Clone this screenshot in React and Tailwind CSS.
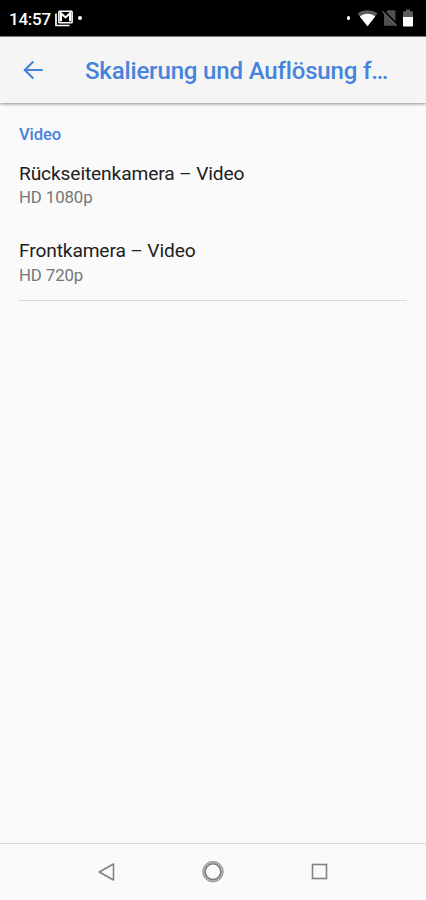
const StatusBar = () => {
  return (
    <div className="flex h-9 items-center justify-between bg-black pl-[9px] pr-[13px] text-white">
      <div className="flex items-center">
        <span className="w-[46px] whitespace-nowrap text-[17px] font-medium leading-9 tracking-[-0.25px] pt-px">14:57</span>
        <svg width="18" height="17" viewBox="0 0 18 17" fill="none">
          <path d="M1 3.5V15.5H14.5" stroke="white" strokeWidth="1.7" />
          <rect x="3.9" y="1.2" width="13.2" height="11.6" rx="0.8" stroke="white" strokeWidth="1.6" />
          <path d="M6 11.3V3.2L10.5 7.4L15 3.2V11.3" stroke="white" strokeWidth="2" />
        </svg>
        <span className="ml-[5px] size-[3.5px] rounded-full bg-white" />
      </div>

      <div className="flex items-center">
        <span className="mr-[7px] size-[3.5px] rounded-full bg-white" />
        <svg className="mr-1" width="21" height="18" viewBox="0 0 21 18">
          <path d="M0.5 4.4C6 0.2 15 0.2 20.5 4.4L10.5 17.2Z" fill="#5c5c5c" />
          <path d="M2.8 7.4C7 4 14 4 18.2 7.4L10.5 17.2Z" fill="white" />
        </svg>
        <svg className="mr-[5px]" width="16" height="18" viewBox="0 0 16 18">
          <path d="M6 1.2H12.2Q13.4 1.2 13.4 2.4V16.8H3.2Q2 16.8 2 15.6V5.2Z" fill="#505050" />
          <path d="M1.4 1.4L15.8 15.8" stroke="black" strokeWidth="1.7" />
          <path d="M0.4 2.4L14.8 16.8" stroke="#5c5c5c" strokeWidth="1.3" />
        </svg>
        <svg width="10" height="18" viewBox="0 0 10 18">
          <path d="M3 0.5H7V2.3H9Q10 2.3 10 3.3V8H0V3.3Q0 2.3 1 2.3H3Z" fill="#5c5c5c" />
          <path d="M0 8H10V16.5Q10 17.5 9 17.5H1Q0 17.5 0 16.5Z" fill="white" />
        </svg>
      </div>
    </div>
  )
}

const Header = () => {
  return (
    <header className="flex h-[67px] items-center border-t border-[#77777a] bg-[#f5f5f5] pl-[23px] text-[#4683dc] shadow-[0_1px_3px_rgba(0,0,0,0.45)]">
      <button className="w-[62px] pb-px" aria-label="Zurück">
        <svg width="21" height="20" viewBox="0 0 21 20" fill="none" stroke="currentColor" strokeWidth="2.1">
          <path d="M19.8 10H2M10.3 1.5L1.8 10L10.3 18.5" />
        </svg>
      </button>
      <h1 className="whitespace-nowrap pt-[2px] text-[24px] font-medium leading-8 tracking-[-0.16px]">Skalierung und Auflösung f…</h1>
    </header>
  )
}

const SettingItem = ({ title, value }) => {
  return (
    <div className="h-[77.25px]">
      <p className="text-[19.2px] leading-[26px] tracking-[-0.14px] text-[#212121]">{title}</p>
      <p className="-mt-[0.7px] text-[16.8px] leading-[22px] tracking-[-0.1px] text-[#757575]">{value}</p>
    </div>
  )
}

const NavigationBar = () => {
  return (
    <nav className="flex h-[57px] items-center justify-between border-t border-[#d8d8d8] px-[98px] pb-px">
      <svg width="17" height="18" viewBox="0 0 17 18" fill="none">
        <path d="M15.5 1V17L1.2 9Z" stroke="#828282" strokeWidth="1.6" strokeLinejoin="round" />
      </svg>
      <svg width="22" height="22" viewBox="0 0 22 22" fill="none">
        <circle cx="11" cy="10.7" r="9.3" stroke="#b4b4b4" strokeWidth="2.6" />
        <circle cx="11" cy="10.7" r="10.2" stroke="#969696" strokeWidth="0.8" />
        <circle cx="11" cy="10.7" r="7.8" stroke="#767676" strokeWidth="1.4" />
      </svg>
      <svg width="17" height="17" viewBox="0 0 17 17" fill="none">
        <rect x="1.5" y="1.5" width="14" height="14" stroke="#828282" strokeWidth="1.6" />
      </svg>
    </nav>
  )
}

export default function App() {
  return (
    <div className="flex h-[900px] w-[426px] flex-col overflow-hidden bg-[#fafafa] font-[Roboto,sans-serif]">
      <StatusBar />
      <Header />
      <main className="flex-1 px-[19px] pt-[21px]">
        <h2 className="mb-[15px] text-[16.6px] font-medium leading-[22px] tracking-[-0.1px] text-[#4683dc]">Video</h2>
        <section className="h-[140px] border-b border-[#d8d8d8]">
          <SettingItem title="Rückseitenkamera – Video" value="HD 1080p" />
          <SettingItem title="Frontkamera – Video" value="HD 720p" />
        </section>
      </main>
      <NavigationBar />
    </div>
  )
}
